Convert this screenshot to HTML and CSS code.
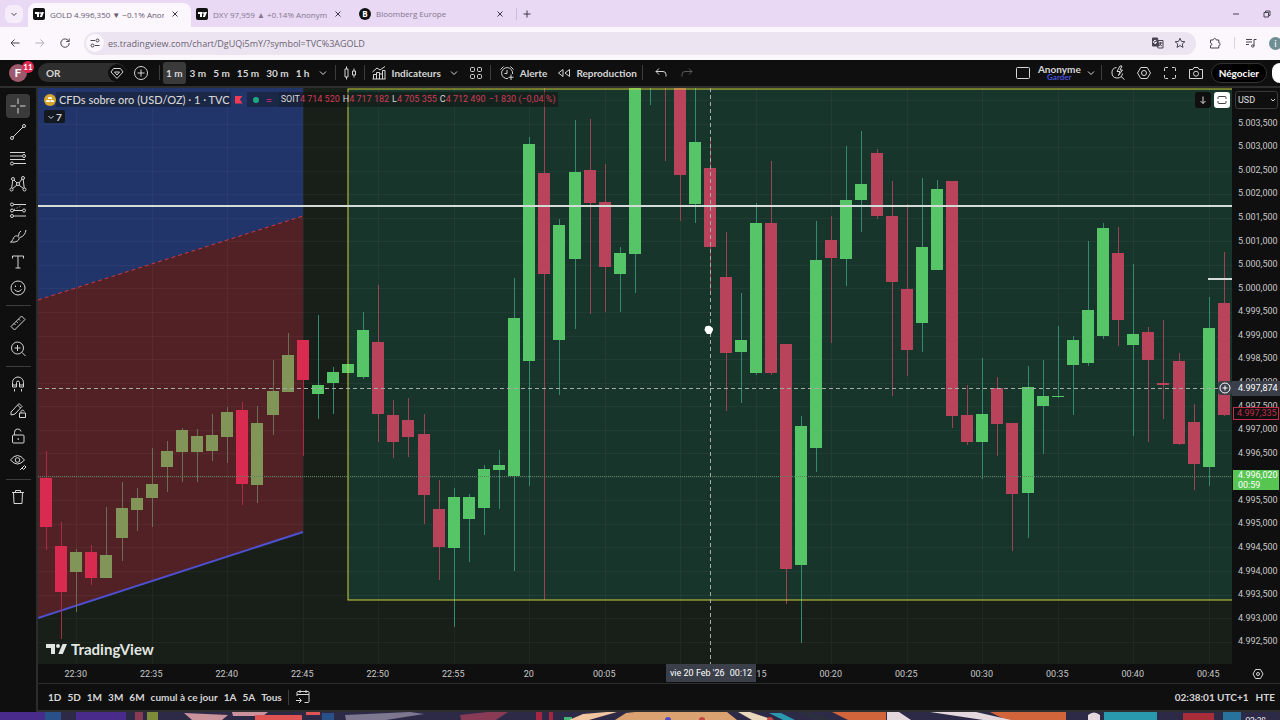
FILE: index.html
```html
<!DOCTYPE html>
<html lang="fr">
<head>
    <meta charset="UTF-8">
    <meta name="viewport" content="width=device-width, initial-scale=1.0">
    <title>GOLD 4.996,350 ▼ −0.1% Anonyme</title>
    <link rel="stylesheet" href="styles.css">
</head>
<body>
    <!-- Browser tabs -->
    <div class="tabs">
        <button class="tab-search" aria-label="Buscar pestañas"><svg class="i10" viewBox="0 0 10 10"><path d="M2.5 4 5 6.5 7.500 4"/></svg></button>
        <div class="tab active">
            <svg class="favicon" viewBox="0 0 12 12"><rect width="12" height="12" rx="2"/><path class="white" d="M2 4h4v5H4V6H2zM8.500 4H11L9 9H6.800z"/><circle class="white" cx="7.100" cy="4.900" r=".9"/></svg>
            <span class="tab-title">GOLD 4.996,350 ▼ −0.1% Anonyme</span>
            <button class="close" aria-label="Cerrar"><svg class="i10" viewBox="0 0 10 10"><path d="m2.500 2.500 5 5m0-5-5 5"/></svg></button>
        </div>
        <div class="tab">
            <svg class="favicon" viewBox="0 0 12 12"><rect width="12" height="12" rx="2"/><path class="white" d="M2 4h4v5H4V6H2zM8.500 4H11L9 9H6.800z"/><circle class="white" cx="7.100" cy="4.900" r=".9"/></svg>
            <span class="tab-title">DXY 97,959 ▲ +0.14% Anonyme</span>
            <button class="close" aria-label="Cerrar"><svg class="i10" viewBox="0 0 10 10"><path d="m2.500 2.500 5 5m0-5-5 5"/></svg></button>
        </div>
        <div class="tab split">
            <span class="favicon bloomberg">B</span>
            <span class="tab-title">Bloomberg Europe</span>
            <button class="close" aria-label="Cerrar"><svg class="i10" viewBox="0 0 10 10"><path d="m2.500 2.500 5 5m0-5-5 5"/></svg></button>
        </div>
        <button class="new-tab" aria-label="Nueva pestaña"><svg class="i10" viewBox="0 0 10 10"><path d="M5 1.500v7M1.500 5h7"/></svg></button>
        <div class="window-buttons">
            <button aria-label="Minimizar"><svg class="i10" viewBox="0 0 10 10"><path d="M2 5h6"/></svg></button>
            <button aria-label="Restaurar"><svg class="i10" viewBox="0 0 10 10"><path d="M2 3.500h4.500V8H2zM3.500 3.500V2H8v4.500H6.500"/></svg></button>
        </div>
    </div>

    <!-- Address bar -->
    <div class="address-bar">
        <button aria-label="Atrás"><svg class="i12" viewBox="0 0 12 12"><path d="M10.500 6h-8.500M5.500 2.500 2 6l3.500 3.500"/></svg></button>
        <button class="faded" aria-label="Adelante"><svg class="i12" viewBox="0 0 12 12"><path d="M1.500 6H10M6.500 2.500 10 6 6.500 9.500"/></svg></button>
        <button aria-label="Recargar"><svg class="i12" viewBox="0 0 12 12"><path d="M9.800 4.300A4.200 4.200 0 1 0 10.200 6M10.200 1.500v3h-3"/></svg></button>
        <div class="url">
            <span class="site-info"><svg class="i12" viewBox="0 0 12 12"><path d="M1.500 3.500H6M6 8.500h4.500"/><circle cx="8.500" cy="3.500" r="1.500"/><circle cx="3.500" cy="8.500" r="1.500"/></svg></span>
            <input type="text" aria-label="Dirección" value="es.tradingview.com/chart/DgUQi5mY/?symbol=TVC%3AGOLD">
            <button aria-label="Traducir"><svg class="i12" viewBox="0 0 12 12"><path d="M6 3.500h5v7.500H6l-1-2"/><path class="dark" d="M.5 1h5l1.500 8H.5z"/><path class="white-line" d="M4.300 4A1.500 1.500 0 1 0 4.500 5.500H3"/><path d="M7 6h3.500M8.700 5v1c0 1.500-1 2.500-1.700 3M7.500 7l2.500 2"/></svg></button>
            <button aria-label="Favorito"><svg class="i12" viewBox="0 0 12 12"><path d="m6 1.200 1.400 3.200 3.500.3-2.700 2.300.8 3.400-3-1.800-3 1.800.8-3.400L1.100 4.700l3.500-.3z"/></svg></button>
        </div>
        <button class="extensions" aria-label="Extensiones"><svg class="i12" viewBox="0 0 12 12"><path d="M1.500 3h2.700c0-2 3-2 3 0h2.600v3c1.800 0 1.800 2.600 0 2.600V11H1.500V8.600c1.800 0 1.800-2.600 0-2.600z"/></svg></button>
        <button class="media" aria-label="Multimedia"><svg class="i12" viewBox="0 0 12 12"><path d="M1 2.500h6M1 5h6M1 7.500h3M9 9V2.500h2.500"/><circle cx="7.800" cy="9" r="1.200"/></svg></button>
        <span class="profile"><b>i</b></span>
    </div>

    <div class="app">
        <header class="toolbar">
            <button class="user">F<span class="badge">11</span></button>
            <button class="symbol">OR <span class="gem"><svg class="i14" viewBox="0 0 14 14"><path d="M3.500 2.500h7L13 6l-6 6.500L1 6zM4.500 6h5L7 9z"/></svg></span></button>
            <button class="w30" aria-label="Comparer"><svg class="i16" viewBox="0 0 16 16"><circle cx="8" cy="8" r="6.500"/><path d="M8 4.500v7M4.500 8h7"/></svg></button>
            <span class="sep"></span>
            <button class="interval selected">1 m</button>
            <button class="interval">3 m</button>
            <button class="interval">5 m</button>
            <button class="interval">15 m</button>
            <button class="interval">30 m</button>
            <button class="interval">1 h</button>
            <button class="w18" aria-label="Intervalles"><svg class="i10" viewBox="0 0 10 10"><path d="M2 3.500 5 6.500l3-3"/></svg></button>
            <span class="sep"></span>
            <button class="w22" aria-label="Bougies"><svg class="i16" viewBox="0 0 16 16"><path d="M3 4h3v8H3zM4.500 1.500V4M4.500 12v2.500M10.500 6h3v4h-3zM12 3.500V6M12 10v2.500"/></svg></button>
            <span class="sep"></span>
            <button class="labelled"><svg class="i16" viewBox="0 0 16 16"><path d="M2.500 14V9.500h3V14M5.500 14V7.500h3V14M8.500 14V9h3V14M11.500 14V5.500h2.500V14M1.500 14h13M1.500 7 6 3l3 2 5-3.500"/></svg>Indicateurs</button>
            <button class="w26" aria-label="Favoris"><svg class="i10" viewBox="0 0 10 10"><path d="M2 3.500 5 6.500l3-3"/></svg></button>
            <button class="w18" aria-label="Modèles"><svg class="i14" viewBox="0 0 14 14"><rect x="1.500" y="1.500" width="4" height="4" rx="1"/><rect x="8.500" y="1.500" width="4" height="4" rx="1"/><rect x="1.500" y="8.500" width="4" height="4" rx="1"/><rect x="8.500" y="8.500" width="4" height="4" rx="1"/></svg></button>
            <span class="sep wide"></span>
            <button class="labelled"><svg class="i16" viewBox="0 0 16 16"><path d="M9 13.500A5.500 5.500 0 1 1 13.500 9M8 5v3.500H5.500M1.500 4.500l3-3M11.500 1.500l3 3M12 9.500v5.500M9.500 12.300h5"/></svg>Alerte</button>
            <button class="labelled replay"><svg class="i14" viewBox="0 0 14 14"><path d="M6 3.500v7L1.500 7zM12.500 3.500v7L8 7z"/></svg>Reproduction</button>
            <span class="sep wide"></span>
            <button class="w26" aria-label="Annuler"><svg class="i14" viewBox="0 0 14 14"><path d="M5 2.500 2 5.500l3 3M2 5.500h7q3 0 3 3v2"/></svg></button>
            <button class="w26 dim" aria-label="Rétablir"><svg class="i14" viewBox="0 0 14 14"><path d="m9 2.500 3 3-3 3M12 5.500H5q-3 0-3 3v2"/></svg></button>

            <div class="toolbar-right">
                <button class="w22" aria-label="Disposition"><svg class="i16" viewBox="0 0 16 16"><rect x="1.500" y="2.500" width="13" height="11" rx="1"/></svg></button>
                <button class="layout-name">Anonyme<small>Garder</small></button>
                <button class="w14" aria-label="Gérer"><svg class="i10" viewBox="0 0 10 10"><path d="M2 3.500 5 6.500l3-3"/></svg></button>
                <span class="sep"></span>
                <button class="w26" aria-label="Recherche rapide"><svg class="i16" viewBox="0 0 16 16"><path d="M6.500 2.500a5.300 5.300 0 1 0 6 6M11 11.500l3.500 3M10 1 7 6.500h3L8.500 10.500 12.500 5H10l2-4z"/></svg></button>
                <button class="w26" aria-label="Paramètres"><svg class="i16" viewBox="0 0 16 16"><path d="M4.800 2.500h6.400L14.500 8l-3.300 5.500H4.800L1.500 8z"/><circle cx="8" cy="8" r="2.500"/></svg></button>
                <button class="w26" aria-label="Plein écran"><svg class="i16" viewBox="0 0 16 16"><path d="M2.500 6V3.500q0-1 1-1H6M10 2.500h2.500q1 0 1 1V6M13.500 10v2.500q0 1-1 1H10M6 13.500H3.500q-1 0-1-1V10"/></svg></button>
                <button class="w26" aria-label="Capture"><svg class="i16" viewBox="0 0 16 16"><path d="M1.500 4.500h3.300l1.200-2h4l1.200 2h3.300v9h-13z"/><circle cx="8" cy="8.700" r="2.500"/></svg></button>
                <button class="trade">Négocier</button>
                <span class="publish"></span>
            </div>
        </header>

        <div class="workspace">
            <nav class="tools">
                <button class="selected" aria-label="Réticule"><svg class="i18" viewBox="0 0 18 18"><path d="M9 1.500v5.500M9 11v5.500M1.500 9H7M11 9h5.500"/></svg></button>
                <button aria-label="Ligne"><svg class="i18" viewBox="0 0 18 18"><circle cx="3" cy="15" r="1.500"/><circle cx="15" cy="3" r="1.500"/><path d="M4 14 14 4"/></svg></button>
                <button aria-label="Fibonacci"><svg class="i18" viewBox="0 0 18 18"><path d="M1 3.500h15M1 7h12M1 10.500h15M5 14.500h12"/><circle cx="15" cy="7" r="1.500"/><circle cx="3" cy="14.500" r="1.500"/></svg></button>
                <button aria-label="Figures"><svg class="i18" viewBox="0 0 18 18"><circle cx="2.500" cy="14.500" r="1.500"/><circle cx="4" cy="4" r="1.500"/><circle cx="9" cy="9" r="1.500"/><circle cx="14" cy="3" r="1.500"/><circle cx="15.500" cy="14.500" r="1.500"/><path d="m2.700 13 1-7.500M5 5l3 3M10 8l3-4M14.200 4.500l1 8.500M3.700 13.500 8 10M10 10l4.300 3.500"/></svg></button>
                <button aria-label="Prévisions"><svg class="i18" viewBox="0 0 18 18"><circle cx="3" cy="3.500" r="1.500"/><circle cx="3" cy="9.500" r="1.500"/><circle cx="3" cy="15" r="1.500"/><circle cx="15" cy="9.500" r="1.500"/><path d="M4.500 3.500H17M4.500 9.500h9M4.500 15H17"/><path stroke-dasharray="1 2" d="m5 8.500 8-4"/></svg></button>
                <button aria-label="Pinceau"><svg class="i18" viewBox="0 0 18 18"><path d="M1.500 15c3-1 2-4 4-5.500 3-2 6 1 4 3.500-1.500 2-5 2.500-8 2zM9.500 9q0-4 2.500-5M11 10.500Q16 9 17 3"/></svg></button>
                <button aria-label="Texte"><svg class="i18" viewBox="0 0 18 18"><path d="M3.500 5.500V3h11v2.500M9 3v12M6.500 15h5"/></svg></button>
                <button aria-label="Icônes"><svg class="i18" viewBox="0 0 18 18"><circle cx="9" cy="9" r="7"/><path d="M6.500 6.500v1.500M11.500 6.500v1.500M5.500 10.500q3.500 4 7 0"/></svg></button>
                <hr>
                <button aria-label="Mesurer"><svg class="i18" viewBox="0 0 18 18"><path d="M12.500 2 16 5.500 5.500 16 2 12.500zM5 9.500l1.500 1.500M7.200 7.300l1.500 1.500M9.500 5l1.500 1.500"/></svg></button>
                <button aria-label="Zoom"><svg class="i18" viewBox="0 0 18 18"><circle cx="8.500" cy="8" r="6"/><path d="M8.500 5v6M5.500 8h6M13 12.500l3.500 3.500"/></svg></button>
                <hr>
                <button aria-label="Aimant"><svg class="i18" viewBox="0 0 18 18"><path d="M3.500 12V7.500a5.500 5.500 0 0 1 11 0V12h-4V7.500a1.500 1.500 0 0 0-3 0V12zM3.500 10h4M10.500 10h4M5.500 14v2.500M12.500 14v2.500"/></svg></button>
                <button aria-label="Mode dessin"><svg class="i18" viewBox="0 0 18 18"><path d="m2 11 8-8.500 3 3L6 13l-4 1zM8.500 4l3 3M10.500 12h6v4.500h-6zM12 12v-1.500a1.700 1.700 0 0 1 3.300 0"/></svg></button>
                <button aria-label="Verrouiller"><svg class="i18" viewBox="0 0 18 18"><rect x="3.500" y="8" width="11.500" height="8" rx="1"/><path d="M5.500 8V5.500a3.300 3.300 0 0 1 6.500-1M9.200 11v2"/></svg></button>
                <button aria-label="Masquer"><svg class="i18" viewBox="0 0 18 18"><path d="M1.500 7q7-9 14 0-7 8-14 0zM11 17l2-2M13 15l2.500-2.500 1.500 1.500-2.500 2.500z"/><circle cx="8.500" cy="7" r="2.300"/></svg></button>
                <hr>
                <button aria-label="Supprimer"><svg class="i18" viewBox="0 0 18 18"><path d="M3 4.500h12M6.500 4.500v-2h5v2M4.500 4.500 5 15.500h8l.5-11"/></svg></button>
            </nav>

            <main class="chart-column">
                <div class="chart-row">
                    <div class="chart">
                        <svg id="plot" viewBox="0 0 1194 576" preserveAspectRatio="none">
                            <path class="channel-top" d="M0 0H265V128L0 212z"/>
                            <path class="channel-bottom" d="M0 212 265 128V444L0 530z"/>
                            <rect class="zone" x="310" y="1" width="890" height="511"/>
                            <g id="grid"></g>
                            <path class="channel-mid" d="M0 212 265 128"/>
                            <path class="channel-low" d="M0 530 265 444"/>
                            <g id="candles"></g>
                            <rect class="zone-border" x="310" y="1" width="890" height="511"/>
                            <path class="level" d="M0 118H1194M1170 191H1194"/>
                            <path class="last-price" d="M0 388.500H1194"/>
                            <path class="crosshair" d="M0 300.500H1194M672.500 0V576"/>
                            <path class="hand" d="M667 240q0-2 2-2 3-1 4 1 2 0 2 3l-2 4h-4l-2-3q-1-1 0-3z"/>
                        </svg>
                        <div class="legend">
                            <div class="legend-title">
                                <svg class="i12" viewBox="0 0 12 12"><circle class="gold" cx="6" cy="6" r="6"/><path class="white" d="M4.500 3h3l.7 2H3.800zM2.500 6h3l.5 2H2zM6.500 6h3l.6 2H6.500z"/></svg>
                                <span class="name">CFDs sobre oro (USD/OZ) · 1 · TVC</span>
                                <span class="flag"></span>
                                <span class="status"><i></i><b>=</b></span>
                                <span class="ohlc"><span>SOIT<em>4 714 520</em></span><span>H<em>4 717 182</em></span><span>L<em>4 705 355</em></span><span>C<em>4 712 490</em></span><em>−1 830 (−0,04 %)</em></span>
                            </div>
                            <button class="indicators"><svg class="i10" viewBox="0 0 10 10"><path d="M2.500 4 5 6.500 7.500 4"/></svg>7</button>
                        </div>
                        <div class="pane-buttons">
                            <button aria-label="Déplacer"><svg class="i10" viewBox="0 0 10 10"><path d="M5 1.500v7M2.500 6 5 8.500 7.500 6"/></svg></button>
                            <button class="light" aria-label="Agrandir"><svg class="i10" viewBox="0 0 10 10"><path d="M1 4V2.500Q1 1.500 2 1.500h6q1 0 1 1V4M1 6v1.500q0 1 1 1h6q1 0 1-1V6"/></svg></button>
                        </div>
                        <button class="add-alert" aria-label="Ajouter"><svg class="i14" viewBox="0 0 14 14"><circle cx="7" cy="7" r="5"/><path d="M7 4.500v5M4.500 7h5"/></svg></button>
                        <div class="logo"><svg viewBox="0 0 21 12"><path d="M0 1h9v10H5V5H0zM16.500 1H21l-4.200 10h-4.500z"/><circle cx="12" cy="3" r="2"/></svg>TradingView</div>
                    </div>
                    <div class="price-axis">
                        <div class="currency">
                            <select aria-label="Devise"><option>USD</option></select>
                            <svg class="i10" viewBox="0 0 10 10"><path d="M3 4 5 6l2-2"/></svg>
                        </div>
                        <div class="prices" id="prices"></div>
                        <span class="tag bid">4.997,335</span>
                        <span class="tag cursor">4.997,874</span>
                        <span class="tag last">4.996,020<br>00:59</span>
                    </div>
                </div>
                <div class="time-row">
                    <div class="times" id="times"></div>
                    <button class="axis-settings" aria-label="Échelle"><svg class="i12" viewBox="0 0 12 12"><path d="M3.500 1.500h5L11 6l-2.500 4.500h-5L1 6z"/><circle cx="6" cy="6" r="1.500"/></svg></button>
                    <span class="tag date">vie 20 Feb '26 <span>00:12</span></span>
                </div>
                <footer class="ranges">
                    <button>1D</button>
                    <button>5D</button>
                    <button>1M</button>
                    <button>3M</button>
                    <button>6M</button>
                    <button>cumul à ce jour</button>
                    <button>1A</button>
                    <button>5A</button>
                    <button>Tous</button>
                    <span class="sep"></span>
                    <button class="goto" aria-label="Aller à"><svg class="i16" viewBox="0 0 16 16"><path d="M2 7V3.500q0-1 1-1h10q1 0 1 1v9q0 1-1 1H9.500M2 5.500h12M5 1v3M11 1v3M1 11.500h5M4 9l2.500 2.500L4 14"/></svg></button>
                    <button class="clock">02:38:01 UTC+1</button>
                    <button>HTE</button>
                </footer>
            </main>
        </div>
    </div>

    <!-- Strip of the desktop wallpaper below the window -->
    <div class="desktop">
        <svg viewBox="0 0 1280 8" preserveAspectRatio="none">
            <rect width="1280" height="8" fill="#2d2a48"/>
            <path fill="#482b8b" d="M0 0h45v8H0zM76 0h50v8H76z"/>
            <path fill="#28518a" d="M45 0h16v8H45zM322 1h12v7h-12z"/>
            <path fill="#893b55" d="M135 0h8v8h-8zM460 3l28-3h20l-12 8h-35z"/>
            <path fill="#7e8b39" d="M147 0h11v8h-11z"/>
            <path fill="#ca939c" d="M184 1l44 2-6 5h-30zM232 0h36l-5 4h-30z"/>
            <path fill="#df5353" d="M255 3h47v5h-47zM306 0h14v3h-14z"/>
            <path fill="#7d7790" d="M345 3l65-3 14 2-38 6h-40z"/>
            <path fill="#a42643" d="M536 0h6v8h-6zM549 0h4v8h-4z"/>
            <path fill="#40b875" d="M564 5h8v3h-8z"/>
            <path fill="#f1c5a0" d="M583 2l24-2h10l-28 8h-20z"/>
            <path fill="#d9a270" d="M626 1l9-1h92l10 8H615z"/>
            <path fill="#ead8bc" d="M738 0h12l24 8h-22z"/>
            <path fill="#2999ae" d="M769 1h12l14 7h-12zM1104 0h53v8h-53z"/>
            <path fill="#d1643a" d="M832 0h54v8h-38zM990 0h76v8h-60z"/>
            <path fill="#e4d8dc" d="M887 0h12l12 8h-24zM930 0h46l35 8h-28zM1088 3q6-5 12 0v5h-12z"/>
            <path fill="#2c303e" d="M797 1l12-1 26 8h-16z"/>
            <path fill="#a92c39" d="M1183 1h31v7h-31z"/>
            <path fill="#27739e" d="M1223 0h18v8h-18z"/>
            <circle fill="#5148c5" cx="668" cy="8" r="3"/>
            <circle fill="#c64643" cx="702" cy="8" r="3"/>
            <circle fill="#c64643" cx="770" cy="8" r="3"/>
        </svg>
        <span class="desktop-clock">02:38</span>
    </div>

    <script src="chart.js"></script>
</body>
</html>
```
FILE: styles.css
```css
* {
    box-sizing: border-box;
}

body {
    margin: 0;
    height: 100vh;
    min-height: 700px;
    display: flex;
    flex-direction: column;
    overflow: hidden;
    background: #0f0f0f;
    font-family: Lato, "Open Sans", sans-serif;
    font-size: 10px;
    color: #d6d6d6;
}

button {
    padding: 0;
    border: none;
    background: none;
    color: inherit;
    font: inherit;
    white-space: nowrap;
    display: flex;
    align-items: center;
    justify-content: center;
    flex: none;
}

svg {
    display: block;
    flex: none;
    fill: none;
    stroke: currentColor;
}

.i10 { width: 10px; height: 10px; }
.i12 { width: 12px; height: 12px; }
.i14 { width: 14px; height: 14px; }
.i16 { width: 16px; height: 16px; }
.i18 { width: 18px; height: 18px; }

.white {
    fill: #fff;
    stroke: none;
}

/* Browser */
.tabs {
    height: 27px;
    flex: none;
    display: flex;
    align-items: center;
    background: #e9d9f4;
    color: #4a4354;
    font-family: "Open Sans", sans-serif;
    font-size: 8px;
}

.tab-search {
    width: 18px;
    height: 18px;
    margin: 0 5px;
    border-radius: 6px;
    background: #f6edfb;
}

.tab {
    width: 163px;
    height: 24px;
    align-self: flex-end;
    padding: 0 9px 2px 5px;
    display: flex;
    align-items: center;
    gap: 4px;
    color: #83768f;
}

.tab.active {
    background: #fcf6fd;
    border-radius: 8px 8px 0 0;
    color: #665b70;
}

.tab.split {
    border-right: 1px solid #cdbcdc;
    height: 12px;
    align-self: center;
    padding-bottom: 0;
}

.favicon {
    width: 12px;
    height: 12px;
    flex: none;
    fill: #111;
    stroke: none;
}

.bloomberg {
    border-radius: 50%;
    background: #111;
    color: #fff;
    font-weight: bold;
    line-height: 12px;
    text-align: center;
}

.tab-title {
    flex: 1;
    margin-left: 1px;
    overflow: hidden;
    white-space: nowrap;
}

.close {
    width: 14px;
    color: #40384a;
}

.new-tab {
    width: 20px;
    color: #40384a;
}

.window-buttons {
    display: flex;
    gap: 21px;
    margin: 0 8px 0 auto;
}

.address-bar {
    height: 33px;
    flex: none;
    padding: 0 0 1px 9px;
    display: flex;
    align-items: center;
    gap: 13px;
    background: #fcf6fd;
    color: #4a4354;
}

.faded {
    color: #b5abbc;
}

.url {
    flex: 1;
    height: 23px;
    padding: 0 10px 0 2px;
    display: flex;
    align-items: center;
    gap: 10px;
    border-radius: 12px;
    background: #ece5f1;
}

.site-info {
    width: 18px;
    height: 18px;
    display: grid;
    place-items: center;
    border-radius: 50%;
    background: #fcf6fd;
}

.url input {
    flex: 1;
    margin-left: -6px;
    padding: 0;
    border: none;
    background: none;
    outline: none;
    color: #6b6273;
    font-family: "Open Sans", sans-serif;
    font-size: 9px;
}

.dark {
    fill: #4a4354;
}

.white-line {
    stroke: #fff;
}

.media {
    padding-left: 10px;
    border-left: 1px solid #ddd0e6;
}

.profile {
    width: 11px;
    overflow: hidden;
    margin-left: -1px;
}

.profile b {
    display: block;
    width: 13px;
    line-height: 13px;
    border-radius: 50%;
    background: #6f8d94;
    color: #fff;
    text-align: center;
    font-weight: normal;
}

/* Top toolbar */
.app {
    flex: 1;
    min-height: 0;
    display: flex;
    flex-direction: column;
}

.toolbar {
    height: 28px;
    flex: none;
    display: flex;
    align-items: center;
    padding-bottom: 1px;
    border-bottom: 2px solid #2e2e2e;
    font-weight: bold;
}

.user {
    position: relative;
    width: 18px;
    height: 18px;
    margin: 0 11px 0 9px;
    border-radius: 50%;
    background: #9d5a6c;
    color: #fff;
    font-size: 12px;
}

.badge {
    position: absolute;
    top: -3px;
    right: -7px;
    width: 12px;
    line-height: 12px;
    border-radius: 50%;
    background: #e02850;
    font-size: 8px;
}

.symbol {
    width: 88px;
    height: 19px;
    padding-left: 8px;
    justify-content: space-between;
    border-radius: 10px;
    background: #2e2e2e;
}

.gem {
    width: 18px;
    height: 18px;
    display: grid;
    place-items: center;
    border-radius: 50%;
    background: #0f0f0f;
}

.w14 { width: 14px; }
.w18 { width: 18px; }
.w22 { width: 22px; }
.w26 { width: 26px; }
.w30 { width: 30px; }

.dim {
    color: #5a5a5a;
}

.sep {
    width: 1px;
    height: 15px;
    margin: 0 3px;
    background: #3d3d3d;
}

.sep.wide {
    margin: 0 5px;
}

.interval {
    height: 22px;
    margin-right: 1px;
    padding: 0 3px;
    border-radius: 3px;
}

.selected {
    background: #3a3a3a;
}

.labelled {
    gap: 5px;
    padding-left: 3px;
}

.replay {
    margin-left: 7px;
}

.toolbar-right {
    margin-left: auto;
    display: flex;
    align-items: center;
}

.layout-name {
    flex-direction: column;
    margin: 0 3px 0 4px;
    line-height: 10px;
}

.layout-name small {
    color: #4750d8;
    font-size: 8px;
    line-height: 7px;
}

.trade {
    height: 20px;
    margin: 0 5px 0 2px;
    padding: 0 7px;
    border: 1px solid #333;
    border-radius: 10px;
    background: #000;
    color: #fff;
}

.publish {
    width: 8px;
    height: 20px;
    border-radius: 10px 0 0 10px;
    background: #fff;
}

/* Drawing tools */
.workspace {
    flex: 1;
    min-height: 0;
    display: flex;
}

.tools {
    width: 38px;
    flex: none;
    padding-top: 6px;
    border-right: 2px solid #2a2d2b;
    display: flex;
    flex-direction: column;
    align-items: center;
    gap: 2px;
}

.tools button {
    width: 24px;
    height: 24px;
    border-radius: 4px;
}

.tools hr {
    width: 25px;
    margin: 3px 0;
    border: none;
    border-top: 1px solid #3d3d3d;
}

/* Chart */
.chart-column {
    flex: 1;
    min-width: 0;
    display: flex;
    flex-direction: column;
    border-bottom: 2px solid #2e2e2e;
}

.chart-row {
    flex: 1;
    min-height: 0;
    display: flex;
}

.chart {
    position: relative;
    flex: 1;
    min-width: 0;
    background: #171f18;
}

#plot {
    width: 100%;
    height: 100%;
}

#plot .channel-top { fill: #22356a; stroke: none; }
#plot .channel-bottom { fill: #522125; stroke: none; }
#plot .channel-mid { stroke: #c83a4c; stroke-dasharray: 4 3; }
#plot .channel-low { stroke: #4e50d0; stroke-width: 2; }
#plot .zone { fill: #18352c; stroke: none; }
#plot .zone-border { stroke: #d0d03c; }
#plot .level { stroke: #d3dcd7; stroke-width: 2; }
#plot .last-price { stroke: #5c8560; stroke-dasharray: 1 1; }
#plot .crosshair { stroke: #a5aaa5; stroke-dasharray: 4 3; }
#plot .hand { fill: #fff; stroke: none; }
#grid { stroke: #fff; stroke-opacity: .04; }

.up { fill: #56c568; stroke: #318b6c; }
.down { fill: #b9435a; stroke: #9c4253; }
.old-up { fill: #829558; stroke: #6b6e50; }
.old-down { fill: #d82b4f; stroke: #a92c46; }
.up rect, .down rect, .old-up rect, .old-down rect { stroke: none; }

.legend {
    position: absolute;
    top: 4px;
    left: 6px;
    right: 60px;
}

.legend-title {
    height: 15px;
    display: flex;
    align-items: center;
    white-space: nowrap;
}

.gold {
    fill: #d6a62c;
    stroke: none;
}

.name {
    padding: 0 1px 0 3px;
    background: #1b2747;
    font-size: 11px;
    line-height: 15px;
    font-weight: 500;
}

.flag {
    width: 8px;
    height: 8px;
    margin: 0 4px;
    background: #f23a50;
    clip-path: polygon(0 0, 100% 0, 65% 50%, 100% 100%, 0 100%);
}

.status {
    width: 32px;
    height: 15px;
    display: flex;
    align-items: center;
    justify-content: space-evenly;
    background: #1b2747;
    color: #c32879;
}

.status i {
    width: 6px;
    height: 6px;
    border-radius: 50%;
    background: #1fa883;
}

.ohlc {
    display: flex;
    gap: 3px;
    padding: 0 2px;
    line-height: 15px;
    background: rgba(15, 15, 15, .5);
    font-family: Roboto, sans-serif;
    font-size: 9px;
}

.ohlc em {
    color: #d03c54;
    font-style: normal;
}

.indicators {
    height: 13px;
    margin-top: 3px;
    padding: 0 3px 0 2px;
    border-radius: 2px;
    background: #141821;
    font-weight: bold;
}

.pane-buttons {
    position: absolute;
    top: 4px;
    right: 2px;
    display: flex;
    gap: 3px;
}

.pane-buttons button {
    width: 16px;
    height: 16px;
    border-radius: 3px;
    background: #0f0f0f;
}

.pane-buttons .light {
    background: #fff;
    color: #444;
}

.add-alert {
    position: absolute;
    top: 293px;
    right: 0;
    width: 14px;
    height: 14px;
    border-radius: 3px;
    background: #3b3f4a;
    color: #fff;
}

.logo {
    position: absolute;
    left: 8px;
    bottom: 6px;
    display: flex;
    align-items: center;
    gap: 4px;
    color: #e2e6e2;
    font-size: 15px;
    line-height: 18px;
    font-weight: bold;
}

.logo svg {
    width: 21px;
    height: 12px;
    fill: currentColor;
    stroke: none;
}

/* Axes */
.price-axis,
.times,
.tag {
    font-family: Roboto, sans-serif;
    font-size: 9px;
}

.price-axis {
    position: relative;
    width: 48px;
    flex: none;
    padding-bottom: 11px;
    display: flex;
    flex-direction: column;
}

.currency {
    position: relative;
    height: 18px;
    margin: 3px 2px 2px 3px;
}

.currency select {
    width: 100%;
    height: 100%;
    padding: 0 2px;
    appearance: none;
    border: 1px solid #3a3a3a;
    border-radius: 3px;
    background: #0f0f0f;
    color: #e0e0e0;
    font: inherit;
}

.currency svg {
    position: absolute;
    top: 4px;
    right: 0;
}

.prices {
    flex: 1;
    display: grid;
    grid-auto-rows: 1fr;
    align-items: center;
    padding-left: 6px;
    color: #c8c8c8;
}

.tag {
    position: absolute;
    padding: 0 6px;
    color: #fff;
    white-space: nowrap;
}

.cursor {
    top: 293px;
    left: 0;
    right: 0;
    line-height: 15px;
    background: #3b3f4a;
}

.bid {
    top: 319px;
    left: 1px;
    right: 1px;
    padding: 0 3px;
    border: 1px solid #c42c4c;
    line-height: 11px;
    background: #0f0f0f;
    color: #c42c4c;
}

.last {
    top: 382px;
    left: 1px;
    right: 1px;
    padding: 0 5px;
    line-height: 10px;
    background: #56c552;
}

.time-row {
    position: relative;
    height: 19px;
    flex: none;
    display: flex;
    align-items: center;
}

.times {
    flex: 1;
    display: grid;
    grid-template-columns: repeat(16, 1fr);
    text-align: center;
    color: #c8c8c8;
}

.axis-settings {
    width: 34px;
    padding-right: 11px;
}

.date {
    top: 0;
    left: 628px;
    padding: 0 4px;
    line-height: 18px;
    background: #3b3f4a;
}

.date span {
    margin-left: 3px;
}

.ranges {
    height: 27px;
    flex: none;
    padding: 0 2px 0 7px;
    display: flex;
    align-items: center;
    border-top: 1px solid #2e2e2e;
    font-weight: bold;
}

.ranges button {
    padding: 0 3px;
}

.ranges .goto {
    padding: 0 3px;
}

.ranges .clock {
    margin-left: auto;
}

.ranges .clock + button {
    margin-left: 1px;
}

.desktop {
    position: relative;
    height: 8px;
    flex: none;
    overflow: hidden;
}

.desktop svg {
    width: 100%;
    height: 8px;
    stroke: none;
}

.desktop-clock {
    position: absolute;
    top: 3px;
    right: 14px;
    color: #fff;
    font-size: 8px;
    line-height: 10px;
}
```
FILE: chart.js
```js
// [type, high, body top, body bottom, low]
const candles = [
    ['old-down', 363, 390, 439, 462],
    ['old-down', 434, 458, 504, 551],
    ['old-up', 461, 464, 484, 524],
    ['old-down', 457, 464, 490, 497],
    ['old-up', 419, 467, 490, 490],
    ['old-up', 394, 420, 450, 473],
    ['old-up', 400, 410, 422, 443],
    ['old-up', 360, 396, 410, 439],
    ['old-up', 353, 363, 379, 404],
    ['old-up', 340, 342, 364, 394],
    ['old-up', 341, 348, 364, 394],
    ['old-up', 326, 347, 363, 373],
    ['old-up', 319, 324, 349, 375],
    ['old-down', 314, 322, 396, 417],
    ['old-up', 318, 335, 397, 415],
    ['old-up', 272, 303, 327, 347],
    ['old-up', 245, 267, 304, 304],
    ['old-down', 252, 252, 292, 368],
    ['up', 227, 297, 306, 331],
    ['up', 279, 284, 295, 326],
    ['up', 276, 276, 285, 285],
    ['up', 224, 242, 289, 291],
    ['down', 197, 254, 326, 354],
    ['down', 312, 327, 354, 370],
    ['down', 310, 332, 349, 369],
    ['down', 326, 346, 407, 436],
    ['down', 392, 421, 459, 492],
    ['up', 400, 409, 460, 539],
    ['up', 406, 409, 431, 474],
    ['up', 377, 381, 420, 447],
    ['up', 362, 377, 382, 421],
    ['up', 190, 230, 388, 483],
    ['up', 49, 56, 273, 398],
    ['down', 0, 85, 186, 512],
    ['up', 131, 137, 252, 307],
    ['up', 32, 84, 171, 241],
    ['down', 31, 82, 115, 226],
    ['down', 76, 114, 179, 224],
    ['up', 159, 165, 186, 224],
    ['up', 0, 0, 166, 205],
    ['up', 0, 0, 0, 17],
    ['down', 0, 0, 0, 73],
    ['down', 0, 0, 87, 133],
    ['up', 0, 54, 116, 135],
    ['down', 53, 80, 159, 205],
    ['down', 144, 189, 265, 323],
    ['up', 205, 252, 264, 315],
    ['up', 115, 135, 285, 287],
    ['down', 73, 135, 285, 287],
    ['down', 256, 256, 481, 516],
    ['up', 328, 338, 477, 555],
    ['up', 133, 172, 360, 384],
    ['down', 128, 152, 170, 255],
    ['up', 58, 112, 171, 198],
    ['up', 43, 96, 112, 144],
    ['down', 61, 65, 128, 131],
    ['down', 93, 128, 194, 308],
    ['down', 116, 201, 262, 288],
    ['up', 90, 159, 235, 264],
    ['up', 92, 101, 182, 182],
    ['down', 93, 93, 328, 340],
    ['down', 297, 327, 354, 357],
    ['up', 270, 326, 354, 391],
    ['down', 289, 300, 336, 368],
    ['down', 335, 335, 406, 463],
    ['up', 278, 299, 405, 450],
    ['up', 272, 308, 318, 366],
    ['up', 238, 308, 309, 310],
    ['up', 248, 252, 277, 327],
    ['up', 153, 222, 275, 278],
    ['up', 135, 140, 248, 251],
    ['down', 139, 165, 232, 258],
    ['up', 176, 246, 257, 348],
    ['down', 239, 244, 272, 354],
    ['down', 232, 295, 297, 331],
    ['down', 265, 273, 356, 357],
    ['down', 316, 334, 376, 402],
    ['up', 209, 240, 379, 398],
    ['down', 164, 215, 327, 328]
];

let bars = '';
candles.forEach(([type, high, top, bottom, low], i) => {
    const x = Math.round(8 + i * 15.1);
    bars += `<g class="${type}"><path d="M${x + 0.5} ${high}V${low}"/>`
        + `<rect x="${x - 6}" y="${top}" width="12" height="${bottom - top}"/></g>`;
});
document.getElementById('candles').innerHTML = bars;

// Grid lines: one per price step and one per five minutes
let lines = '';
for (let i = 0; i < 24; i++) {
    lines += `M0 ${Math.round(12 + i * 23.55) + 0.5}H1194`;
}
for (let i = 0; i < 16; i++) {
    lines += `M${Math.round(38 + i * 75.5) + 0.5} 0V576`;
}
document.getElementById('grid').innerHTML = `<path d="${lines}"/>`;

// Price labels, from 5.003,500 down in steps of 0,500
let prices = '';
for (let value = 5003500; value >= 4992500; value -= 500) {
    const text = String(value);
    prices += `<span>${text[0]}.${text.slice(1, 4)},${text.slice(4)}</span>`;
}
document.getElementById('prices').innerHTML = prices;

const times = ['22:30', '22:35', '22:40', '22:45', '22:50', '22:55', '20', '00:05',
    '00:10', '00:15', '00:20', '00:25', '00:30', '00:35', '00:40', '00:45'];
document.getElementById('times').innerHTML = times.map(t => `<span>${t}</span>`).join('');
```
